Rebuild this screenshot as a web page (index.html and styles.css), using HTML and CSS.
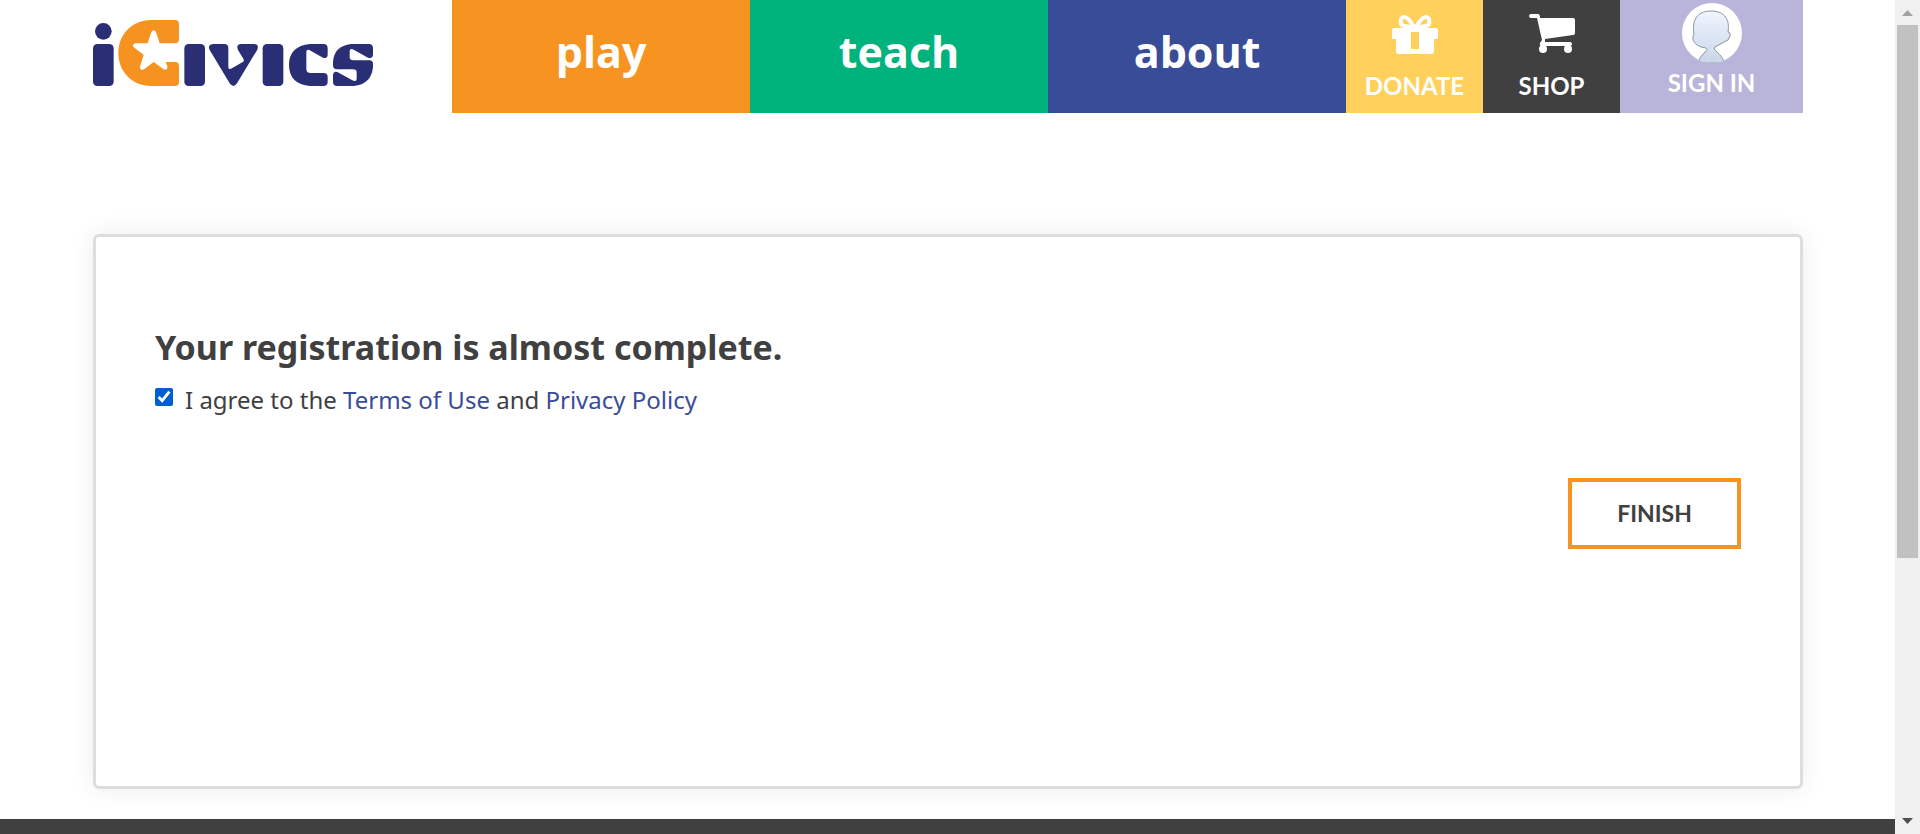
FILE: index.html
```html
<!DOCTYPE html>
<html lang="en">
<head>
<meta charset="utf-8">
<title>iCivics | Registration</title>
<link rel="stylesheet" href="styles.css">
</head>
<body>
<div class="page">
  <header class="header">
    <a class="logo" href="#" aria-label="iCivics home">
      <svg viewBox="39 60 840 198" aria-hidden="true">
        <g fill="#292e75">
          <circle cx="70" cy="94" r="25"/>
          <rect x="39" y="132" width="62" height="126" rx="13"/>
          <rect x="313" y="132" width="62" height="126" rx="13"/>
          <rect x="548" y="132" width="62" height="126" rx="13"/>
          <path d="M399 132H433Q445 132 445 144V201Q445 210 453 206L487 187Q494 183 490 176L474 150Q467 132 484 132H521Q538 132 532 149L471 250Q460 266 449 250L389 150Q382 134 399 132Z"/>
          <path d="M690 132H730Q743 132 743 145V163Q743 178 729 173L692 152Q679 145 679 158V207Q679 219 692 219H730Q743 219 743 230V246Q743 258 730 258H690Q627 252 627 195T690 132Z"/>
          <path d="M813 132H866Q879 132 879 145V162Q879 178 864 173L821 149Q809 144 809 154V172Q809 181 820 181H868Q879 181 879 192V200Q875 252 821 258H772Q759 258 759 246V227Q759 213 772 216L817 241Q830 247 830 236V216Q830 208 818 208H771Q759 208 759 196V186Q762 138 813 132Z"/>
        </g>
        <path fill="#f69320" d="M214 60H285Q297 60 297 72V118Q297 130 285 130H239L228 96Q221 85 214 96L203 130H165Q153 135 163 143L191 164L180 200Q180 213 192 208L221 186L251 208Q263 212 262 199L257 186H285Q297 186 297 199V246Q297 258 285 258H214C155 258 115 213 115 159S155 60 214 60Z"/>
      </svg>
    </a>
    <nav class="nav" aria-label="Main">
      <a class="tab play" href="#">play</a>
      <a class="tab teach" href="#">teach</a>
      <a class="tab about" href="#">about</a>
      <a class="action donate" href="#">
        <svg class="icon" viewBox="0 0 46 40" aria-hidden="true">
          <path fill="#fff" fill-rule="evenodd" d="M2 14H44Q46 14 46 16V25H42V37Q42 40 39 40H7Q4 40 4 37V25H0V16Q0 14 2 14ZM19 18V35H27V18Z"/>
          <path fill="none" stroke="#fff" stroke-width="4" d="M22 13C18 6 15 3 12 3C8 3 7 11 12 12Q17 13 22 13ZM24 13C28 6 31 3 34 3C38 3 39 11 34 12Q29 13 24 13Z"/>
        </svg>
        <span>DONATE</span>
      </a>
      <a class="action shop" href="#">
        <svg class="icon" viewBox="0 0 46 40" aria-hidden="true">
          <path fill="#fff" d="M2 0H9Q11 0 11 4H44Q46 4 46 6V19Q46 21 44 21L16 25V28H41Q43 28 43 30T41 32H13Q10 32 11 29L13 26L8 4H2Q0 4 0 2T2 0Z"/>
          <circle cx="14" cy="35" r="4" fill="#fff"/><circle cx="39" cy="35" r="4" fill="#fff"/>
        </svg>
        <span>SHOP</span>
      </a>
      <a class="action signin" href="#">
        <svg class="avatar" viewBox="0 0 60 60" aria-hidden="true">
          <defs>
            <linearGradient id="skin" x1="0" y1="0" x2="0" y2="1"><stop offset="0" stop-color="#f0f5ff"/><stop offset="1" stop-color="#c9d6e8"/></linearGradient>
            <clipPath id="disc"><circle cx="30" cy="30" r="30"/></clipPath>
          </defs>
          <circle cx="30" cy="30" r="30" fill="#fff"/>
          <path clip-path="url(#disc)" fill="url(#skin)" stroke="#8f959d" d="M12 31C10 20 13 8 29 8C43 8 48 17 46 29Q49 29 48 33Q47 38 42 39L33 44Q31 46 34 48Q42 55 42 60H16Q17 54 24 48Q26 46 24 45C15 44 10 39 11 33Z"/>
        </svg>
        <span>SIGN IN</span>
      </a>
    </nav>
  </header>
  <main class="main">
    <form class="card">
      <h1 class="title">Your registration is almost complete.</h1>
      <div class="agree">
        <input class="check" type="checkbox" id="agree" checked>
        <label for="agree">I agree to the <a href="#">Terms of Use</a> and <a href="#">Privacy Policy</a></label>
      </div>
      <button class="finish" type="button">FINISH</button>
    </form>
  </main>
  <footer class="footer"></footer>
</div>
<div class="scrollbar" aria-hidden="true">
  <svg class="arrow" viewBox="0 0 25 25"><path fill="#a3a3a3" d="M7 16L12.500 10L18 16Z"/></svg>
  <div class="track"><div class="thumb"></div></div>
  <svg class="arrow" viewBox="0 0 25 25"><path fill="#505050" d="M7 9L12.500 15L18 9Z"/></svg>
</div>
</body>
</html>
```
FILE: styles.css
```css
* { box-sizing: border-box; }

body {
  display: flex;
  height: 100vh;
  margin: 0;
  overflow: hidden;
  background: #fff;
  color: #404041;
  font-family: "Noto Sans", sans-serif;
  font-size: 24px;
}

a { color: #394c98; text-decoration: none; }

.page {
  display: flex;
  flex: 1;
  flex-direction: column;
}

.header {
  display: flex;
  align-items: stretch;
  justify-content: space-between;
  padding: 0 92px 0 93px;
}

.logo { padding-top: 20px; }
.logo svg { display: block; width: 280px; height: 66px; }

.nav {
  display: flex;
  flex: 0 0 79%;
  height: 113px;
}

.nav a { color: #fff; font-weight: 700; }

.nav .tab {
  display: flex;
  flex: 1;
  align-items: center;
  justify-content: center;
  padding-bottom: 10px;
  font-family: "Open Sans", sans-serif;
  font-size: 43px;
  line-height: 56px;
}

.play { background: #f79321; }
.teach { background: #00b37d; }
.about { background: #394c98; }

.action {
  display: flex;
  flex: 0 0 137px;
  flex-direction: column;
  align-items: center;
  gap: 16px;
  padding-top: 14px;
  font-family: Lato, sans-serif;
  font-size: 24px;
  line-height: 32px;
}

.donate { background: #ffd05c; }
.shop { background: #404041; }
.signin {
  flex-basis: 183px;
  gap: 4px;
  padding-top: 3px;
  background: #b9b4da;
}

.icon { width: 46px; height: 40px; }
.avatar { width: 60px; height: 60px; }

.main {
  display: flex;
  flex: 1;
  padding: 121px 92px 30px 93px;
}

.card {
  display: flex;
  flex: 1;
  flex-direction: column;
  padding: 86px 59px;
  border: 3px solid #ddd;
  border-radius: 6px;
  box-shadow: 0 0 24px rgba(0, 0, 0, 0.08);
}

.title {
  margin: 0;
  font-size: 34px;
  line-height: 48px;
}

.agree {
  display: flex;
  align-items: flex-start;
  gap: 12px;
  margin-top: 11px;
  line-height: 36px;
}

.check {
  width: 18px;
  height: 18px;
  margin: 6px 0 0;
  accent-color: #005fcc;
}

.finish {
  align-self: flex-end;
  min-width: 173px;
  margin-top: 60px;
  padding: 16px 44px;
  border: 4px solid #f79321;
  background: #fff;
  color: #404041;
  font: 700 23px/31px Lato, sans-serif;
}

.footer { height: 15px; background: #404041; }

.scrollbar {
  display: flex;
  flex: 0 0 25px;
  flex-direction: column;
  background: #f0f0f0;
}

.arrow { width: 25px; height: 25px; }
.track { flex: 1; padding: 0 2px; }
.thumb { height: 68%; background: #c1c1c1; }
```
